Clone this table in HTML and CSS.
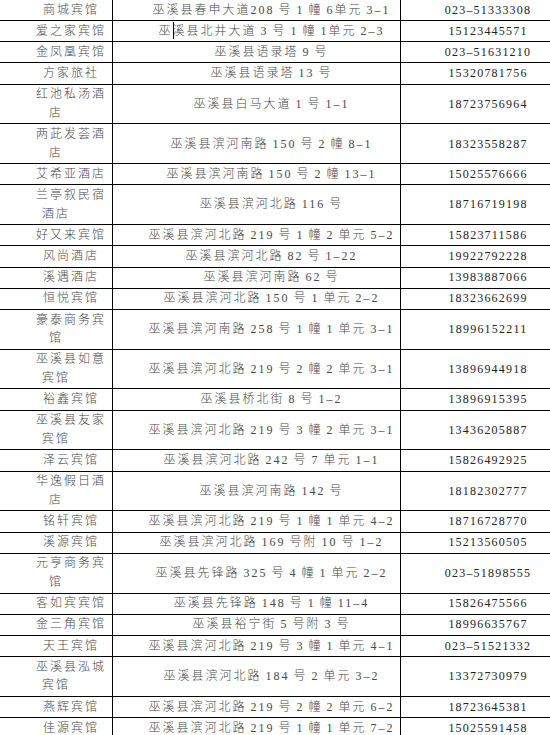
FILE: index.html
```html
<!DOCTYPE html>
<html lang="zh-CN">
<head>
<meta charset="utf-8">
<title>巫溪县宾馆名录</title>
<link rel="stylesheet" href="styles.css">
</head>
<body>
<table class="list">
<colgroup><col class="c-name"><col class="c-addr"><col class="c-tel"></colgroup>
<tbody>
<tr><td class="name">商城宾馆</td><td class="addr">巫溪县春申大道208 号 1 幢 6单元 3–1</td><td class="tel">023–51333308</td></tr>
<tr><td class="name">爱之家宾馆</td><td class="addr">巫<span class="caret"></span>溪县北井大道 3 号 1 幢 1单元 2–3</td><td class="tel">15123445571</td></tr>
<tr><td class="name">金凤凰宾馆</td><td class="addr">巫溪县语录塔 9 号</td><td class="tel">023–51631210</td></tr>
<tr><td class="name">方家旅社</td><td class="addr">巫溪县语录塔 13 号</td><td class="tel">15320781756</td></tr>
<tr><td class="name">红池私汤酒店</td><td class="addr">巫溪县白马大道 1 号 1–1</td><td class="tel">18723756964</td></tr>
<tr><td class="name">两茈发荟酒店</td><td class="addr">巫溪县滨河南路 150 号 2 幢 8–1</td><td class="tel">18323558287</td></tr>
<tr><td class="name">艾希亚酒店</td><td class="addr">巫溪县滨河南路 150 号 2 幢 13–1</td><td class="tel">15025576666</td></tr>
<tr><td class="name">兰亭叙民宿酒店</td><td class="addr">巫溪县滨河北路 116 号</td><td class="tel">18716719198</td></tr>
<tr><td class="name">好又来宾馆</td><td class="addr">巫溪县滨河北路 219 号 1 幢 2 单元 5–2</td><td class="tel">15823711586</td></tr>
<tr><td class="name">风尚酒店</td><td class="addr">巫溪县滨河北路 82 号 1–22</td><td class="tel">19922792228</td></tr>
<tr><td class="name">溪遇酒店</td><td class="addr">巫溪县滨河南路 62 号</td><td class="tel">13983887066</td></tr>
<tr><td class="name">恒悦宾馆</td><td class="addr">巫溪县滨河北路 150 号 1 单元 2–2</td><td class="tel">18323662699</td></tr>
<tr><td class="name">豪泰商务宾馆</td><td class="addr">巫溪县滨河南路 258 号 1 幢 1 单元 3–1</td><td class="tel">18996152211</td></tr>
<tr><td class="name">巫溪县如意宾馆</td><td class="addr">巫溪县滨河北路 219 号 2 幢 2 单元 3–1</td><td class="tel">13896944918</td></tr>
<tr><td class="name">裕鑫宾馆</td><td class="addr">巫溪县桥北街 8 号 1–2</td><td class="tel">13896915395</td></tr>
<tr><td class="name">巫溪县友家宾馆</td><td class="addr">巫溪县滨河北路 219 号 3 幢 2 单元 3–1</td><td class="tel">13436205887</td></tr>
<tr><td class="name">泽云宾馆</td><td class="addr">巫溪县滨河北路 242 号 7 单元 1–1</td><td class="tel">15826492925</td></tr>
<tr><td class="name">华逸假日酒店</td><td class="addr">巫溪县滨河南路 142 号</td><td class="tel">18182302777</td></tr>
<tr><td class="name">铭轩宾馆</td><td class="addr">巫溪县滨河北路 219 号 1 幢 1 单元 4–2</td><td class="tel">18716728770</td></tr>
<tr><td class="name">溪源宾馆</td><td class="addr">巫溪县滨河北路 169 号附 10 号 1–2</td><td class="tel">15213560505</td></tr>
<tr><td class="name">元亨商务宾馆</td><td class="addr">巫溪县先锋路 325 号 4 幢 1 单元 2–2</td><td class="tel">023–51898555</td></tr>
<tr><td class="name">客如宾宾馆</td><td class="addr">巫溪县先锋路 148 号 1 幢 11–4</td><td class="tel">15826475566</td></tr>
<tr><td class="name">金三角宾馆</td><td class="addr">巫溪县裕宁街 5 号附 3 号</td><td class="tel">18996635767</td></tr>
<tr><td class="name">天王宾馆</td><td class="addr">巫溪县滨河北路 219 号 3 幢 1 单元 4–1</td><td class="tel">023–51521332</td></tr>
<tr><td class="name">巫溪县泓城宾馆</td><td class="addr">巫溪县滨河北路 184 号 2 单元 3–2</td><td class="tel">13372730979</td></tr>
<tr><td class="name">燕辉宾馆</td><td class="addr">巫溪县滨河北路 219 号 2 幢 2 单元 6–2</td><td class="tel">18723645381</td></tr>
<tr><td class="name">佳源宾馆</td><td class="addr">巫溪县滨河北路 219 号 1 幢 1 单元 7–2</td><td class="tel">15025591458</td></tr>
</tbody>
</table>
</body>
</html>
```
FILE: styles.css
```css
html, body {
  margin: 0;
  padding: 0;
  background: #ffffff;
}

.list {
  border-collapse: collapse;
  table-layout: fixed;
  width: 551px;
  margin: -1px 0 0 -1px;
  font-family: "Liberation Serif", "Noto Sans CJK SC", serif;
  font-size: 12px;
  font-weight: 300;
  color: #484848;
}

.c-name { width: 113px; }
.c-addr { width: 288px; }
.c-tel { width: 150px; }

.list td {
  border: 1px solid #000000;
  padding: 0.75px 2px;
  line-height: 18.65px;
  text-align: center;
  vertical-align: middle;
}

.list td.name {
  letter-spacing: 2px;
}

.list td.name::before {
  content: "";
  display: inline-block;
  width: 30px;
  height: 1px;
}

.list td.addr {
  letter-spacing: 2px;
  word-spacing: -1px;
  white-space: nowrap;
}

.list td.addr::before {
  content: "";
  display: inline-block;
  width: 30px;
  height: 1px;
}

.list td.tel {
  letter-spacing: 1.2px;
  color: #222222;
  white-space: nowrap;
}

.list td.tel::before {
  content: "";
  display: inline-block;
  width: 25px;
  height: 1px;
}

.caret {
  display: inline-block;
  width: 1px;
  height: 17px;
  margin-right: -1px;
  background: #000000;
  vertical-align: -4px;
}
```
